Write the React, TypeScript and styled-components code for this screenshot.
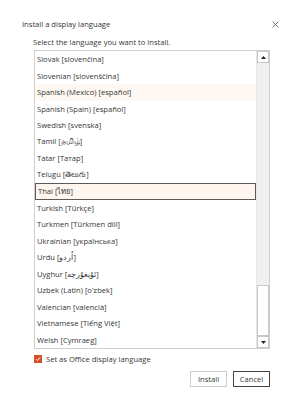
import styled, { createGlobalStyle } from "styled-components";

const GlobalStyle = createGlobalStyle`
  body {
    margin: 0;
    background: #ffffff;
    font-family: "Open Sans", "Noto Sans", "Liberation Sans", sans-serif;
    color: #363636;
  }
`;

const Dialog = styled.div`
  width: 290px;
  height: 400px;
  box-sizing: border-box;
  padding: 17px 8px 0 22px;
  display: flex;
  flex-direction: column;
  background: #ffffff;
`;

const TitleBar = styled.div`
  display: flex;
  align-items: center;
  justify-content: space-between;
  height: 14px;
`;

const Title = styled.h1`
  margin: 0;
  font-size: 7.6px;
  font-weight: normal;
  color: #333333;
`;

const CloseButton = styled.button`
  width: 14px;
  height: 14px;
  padding: 0;
  border: none;
  background: none;
  display: flex;
  align-items: center;
  justify-content: center;
`;

const Body = styled.div`
  display: flex;
  flex-direction: column;
  padding-left: 12px;
  margin-top: 5px;
  width: 236px;
`;

const Prompt = styled.div`
  font-size: 7.6px;
  height: 13px;
  line-height: 13px;
  margin-left: -1px;
`;

const ListBox = styled.div`
  display: flex;
  height: 297px;
  border: 1px solid #cfcfcf;
  margin-top: 1px;
  background: #ffffff;
`;

const Items = styled.ul`
  flex: 1;
  margin: 0;
  padding: 0;
  list-style: none;
  overflow: hidden;
`;

const Item = styled.li<{ $state?: "hover" | "selected" }>`
  height: 16.5px;
  box-sizing: border-box;
  display: flex;
  align-items: center;
  padding-left: 2px;
  font-size: 7.6px;
  white-space: nowrap;
  background: ${(p) =>
    p.$state === "selected" ? "#fdf5ee" : p.$state === "hover" ? "#fef8f3" : "transparent"};
  border: 1px solid ${(p) => (p.$state === "selected" ? "#5a5a5a" : "transparent")};
  border-left-width: ${(p) => (p.$state === "selected" ? "1px" : "0")};
`;

const ScrollBar = styled.div`
  width: 12px;
  display: flex;
  flex-direction: column;
  background: #f0f0f0;
  border-left: 1px solid #e6e6e6;
`;

const Arrow = styled.div`
  height: 12px;
  box-sizing: border-box;
  background: #ffffff;
  border: 1px solid #c6c6c6;
  display: flex;
  align-items: center;
  justify-content: center;
`;

const Track = styled.div`
  flex: 1;
  display: flex;
  flex-direction: column;
  justify-content: flex-end;
`;

const Thumb = styled.div`
  height: 51px;
  box-sizing: border-box;
  background: #ffffff;
  border: 1px solid #c6c6c6;
`;

const CheckRow = styled.label`
  display: flex;
  align-items: center;
  gap: 4px;
  margin-top: 5px;
  font-size: 7.6px;
  height: 10px;
`;

const Box = styled.span`
  width: 8px;
  height: 8px;
  background: #d4512a;
  display: flex;
  align-items: center;
  justify-content: center;
`;

const Buttons = styled.div`
  display: flex;
  justify-content: flex-end;
  gap: 6px;
  margin-top: 7px;
`;

const Button = styled.button<{ $primary?: boolean }>`
  width: 37px;
  height: 16px;
  padding: 0;
  background: #ffffff;
  font-family: inherit;
  font-size: 7.6px;
  color: #363636;
  border: ${(p) => (p.$primary ? "1.5px solid #444444" : "1px solid #cccccc")};
`;

const languages = [
  "Slovak [slovenčina]",
  "Slovenian [slovenščina]",
  "Spanish (Mexico) [español]",
  "Spanish (Spain) [español]",
  "Swedish [svenska]",
  "Tamil [தமிழ்]",
  "Tatar [Татар]",
  "Telugu [తెలుగు]",
  "Thai [ไทย]",
  "Turkish [Türkçe]",
  "Turkmen [Türkmen dili]",
  "Ukrainian [українська]",
  "Urdu [اُردو]",
  "Uyghur [ئۇيغۇرچە]",
  "Uzbek (Latin) [o'zbek]",
  "Valencian [valencià]",
  "Vietnamese [Tiếng Việt]",
  "Welsh [Cymraeg]",
];

const App = () => {
  return (
    <>
      <GlobalStyle />
      <Dialog>
        <TitleBar>
          <Title>Install a display language</Title>
          <CloseButton aria-label="Close">
            <svg width="7" height="7" viewBox="0 0 7 7">
              <path d="M0.5 0.5 L6.5 6.5 M6.5 0.5 L0.5 6.5" stroke="#555" strokeWidth="0.8" />
            </svg>
          </CloseButton>
        </TitleBar>
        <Body>
          <Prompt>Select the language you want to install.</Prompt>
          <ListBox>
            <Items>
              {languages.map((name, i) => (
                <Item key={name} $state={i === 2 ? "hover" : i === 8 ? "selected" : undefined}>
                  {name}
                </Item>
              ))}
            </Items>
            <ScrollBar>
              <Arrow>
                <svg width="5" height="3" viewBox="0 0 5 3">
                  <path d="M2.5 0 L5 3 L0 3 Z" fill="#222" />
                </svg>
              </Arrow>
              <Track>
                <Thumb />
              </Track>
              <Arrow>
                <svg width="5" height="3" viewBox="0 0 5 3">
                  <path d="M0 0 L5 0 L2.5 3 Z" fill="#222" />
                </svg>
              </Arrow>
            </ScrollBar>
          </ListBox>
          <CheckRow>
            <Box>
              <svg width="6" height="6" viewBox="0 0 6 6">
                <path d="M1 3.2 L2.4 4.6 L5 1.4" stroke="#fff" strokeWidth="1" fill="none" />
              </svg>
            </Box>
            Set as Office display language
          </CheckRow>
          <Buttons>
            <Button>Install</Button>
            <Button $primary>Cancel</Button>
          </Buttons>
        </Body>
      </Dialog>
    </>
  );
};

export default App;
